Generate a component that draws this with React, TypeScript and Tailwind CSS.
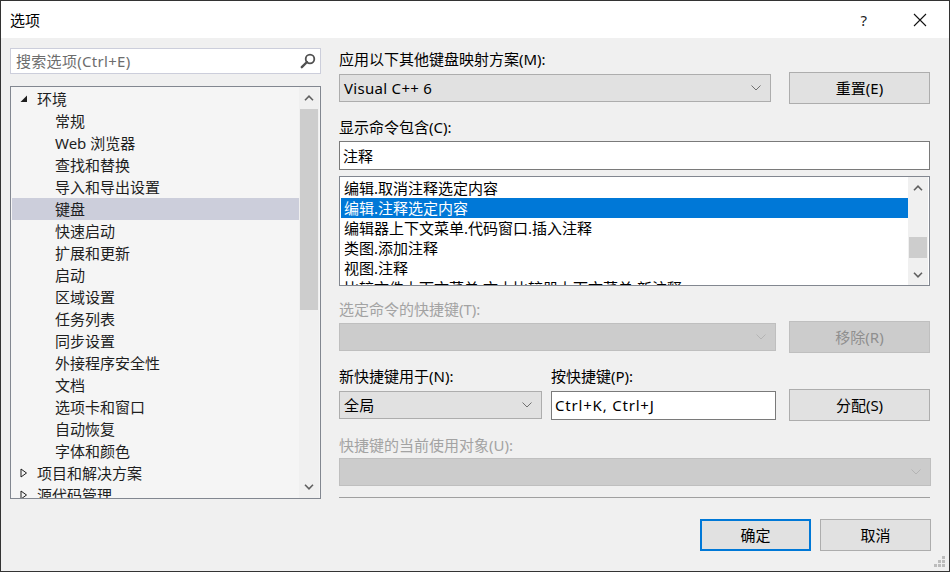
import React from "react";

const treeItems: { label: string; level: number; state?: "open" | "closed" }[] = [
  { label: "环境", level: 0, state: "open" },
  { label: "常规", level: 1 },
  { label: "Web 浏览器", level: 1 },
  { label: "查找和替换", level: 1 },
  { label: "导入和导出设置", level: 1 },
  { label: "键盘", level: 1 },
  { label: "快速启动", level: 1 },
  { label: "扩展和更新", level: 1 },
  { label: "启动", level: 1 },
  { label: "区域设置", level: 1 },
  { label: "任务列表", level: 1 },
  { label: "同步设置", level: 1 },
  { label: "外接程序安全性", level: 1 },
  { label: "文档", level: 1 },
  { label: "选项卡和窗口", level: 1 },
  { label: "自动恢复", level: 1 },
  { label: "字体和颜色", level: 1 },
  { label: "项目和解决方案", level: 0, state: "closed" },
  { label: "源代码管理", level: 0, state: "closed" },
];

const commands = [
  "编辑.取消注释选定内容",
  "编辑.注释选定内容",
  "编辑器上下文菜单.代码窗口.插入注释",
  "类图.添加注释",
  "视图.注释",
  "比较文件上下文菜单.文本比较器上下文菜单.新注释",
];

const ScrollArrow = ({ up }: { up?: boolean }) => (
  <svg width="10" height="6" viewBox="0 0 10 6">
    <polyline
      points={up ? "1,5.2 5,1.2 9,5.2" : "1,0.8 5,4.8 9,0.8"}
      fill="none"
      stroke="#606060"
      strokeWidth="1.6"
    />
  </svg>
);

const ComboArrow = ({ disabled }: { disabled?: boolean }) => (
  <svg width="10" height="6" viewBox="0 0 10 6">
    <polyline points="0.5,0.5 5,5 9.5,0.5" fill="none" stroke={disabled ? "#b4b4b4" : "#707070"} strokeWidth="1" />
  </svg>
);

const Combo = ({ value, width, disabled }: { value?: string; width: string; disabled?: boolean }) => (
  <div
    className={`${width} h-[28px] flex items-center pl-[4px] pr-[9px] border ${
      disabled ? "bg-[#cccccc] border-[#bfbfbf]" : "bg-[#e1e1e1] border-[#adadad]"
    }`}
  >
    <span className="flex-1 text-[15px] leading-[20px] text-black tracking-[0.3px]">{value}</span>
    <ComboArrow disabled={disabled} />
  </div>
);

const Button = ({ label, disabled, primary, width = "w-[141px]" }: { label: string; disabled?: boolean; primary?: boolean; width?: string }) => (
  <div
    className={`${width} h-[32px] flex items-center justify-center text-[15px] leading-[20px] ${
      disabled
        ? "bg-[#cccccc] border border-[#bfbfbf] text-[#8f8f8f]"
        : primary
        ? "bg-[#e1e1e1] border-2 border-[#0078d7] text-black"
        : "bg-[#e1e1e1] border border-[#adadad] text-black"
    }`}
  >
    {label}
  </div>
);

const Label = ({ text, disabled }: { text: string; disabled?: boolean }) => (
  <div className={`h-[20px] text-[15px] leading-[20px] whitespace-nowrap ${disabled ? "text-[#a3a3a3]" : "text-black"}`}>{text}</div>
);

const Expander = ({ state }: { state?: "open" | "closed" }) =>
  state === "open" ? (
    <svg width="8" height="8" viewBox="0 0 8 8" className="mr-[9px]">
      <polygon points="7,0.5 7,7 0.5,7" fill="#1e1e1e" />
    </svg>
  ) : (
    <svg width="8" height="10" viewBox="0 0 8 10" className="mr-[9px]">
      <polygon points="1,1 6.5,5 1,9" fill="none" stroke="#1e1e1e" strokeWidth="1" />
    </svg>
  );

export default function App() {
  return (
    <div className="relative w-[950px] h-[572px] flex flex-col overflow-hidden border border-[#333333] bg-[#f0f0f0] text-black font-['Noto_Sans','Noto_Sans_CJK_SC',sans-serif]">
      {/* Title bar */}
      <div className="h-[37px] shrink-0 bg-white flex items-center">
        <span className="pl-[9px] text-[15px] leading-[20px] font-['Noto_Sans_CJK_SC',sans-serif]">选项</span>
        <span className="ml-auto text-[15px] leading-[20px] text-[#222]">?</span>
        <svg width="14" height="14" viewBox="0 0 14 14" className="ml-[46px] mr-[22px]">
          <path d="M1 1 L13 13 M13 1 L1 13" stroke="#111" strokeWidth="1.1" />
        </svg>
      </div>

      <div className="flex flex-1">
        {/* Left: search + tree */}
        <div className="pl-[9px] pt-[10px] flex flex-col">
          <div className="w-[311px] h-[26px] bg-white border border-[#cccedb] flex items-center pl-[5px] pr-[4px]">
            <span className="flex-1 text-[15px] leading-[20px] text-[#6d6d6d] tracking-[0.3px]">搜索选项(Ctrl+E)</span>
            <svg width="16" height="16" viewBox="0 0 16 16">
              <circle cx="10" cy="6" r="4.3" fill="none" stroke="#505050" strokeWidth="1.8" />
              <path d="M7 9 L1.8 14.2" stroke="#505050" strokeWidth="2.4" strokeLinecap="round" />
            </svg>
          </div>

          <div className="mt-[12px] w-[311px] h-[413px] border border-[#828790] bg-[#f5f5f5] flex overflow-hidden">
            <div className="flex-1 pt-[1px] pl-[1px] overflow-hidden">
              {treeItems.map((item) => (
                <div
                  key={item.label}
                  className={`h-[22px] flex items-center text-[15px] leading-[20px] text-[#1e1e1e] ${
                    item.label === "键盘" ? "bg-[#cccedb]" : ""
                  } ${item.level === 0 ? "pl-[8px]" : "pl-[43px]"}`}
                >
                  {item.level === 0 && <Expander state={item.state} />}
                  <span className="whitespace-nowrap">{item.label}</span>
                </div>
              ))}
            </div>
            <div className="w-[20px] mr-[1px] bg-[#f0f0f0] flex flex-col">
              <div className="h-[22px] flex items-center justify-center">
                <ScrollArrow up />
              </div>
              <div className="h-[201px] mx-[1px] bg-[#cdcdcd]" />
              <div className="flex-1" />
              <div className="h-[22px] flex items-center justify-center">
                <ScrollArrow />
              </div>
            </div>
          </div>
        </div>

        {/* Right: keyboard settings */}
        <div className="ml-[18px] pt-[11px] w-[592px] flex flex-col">
          <Label text="应用以下其他键盘映射方案(M):" />
          <div className="mt-[3px] h-[32px] flex items-center">
            <Combo value="Visual C++ 6" width="w-[432px]" />
            <div className="ml-auto mr-[1px]">
              <Button label="重置(E)" />
            </div>
          </div>

          <div className="mt-[13px]">
            <Label text="显示命令包含(C):" />
          </div>
          <div className="mt-[4px] w-[591px] h-[29px] bg-white border border-[#7a7a7a] flex items-center pl-[3px]">
            <span className="text-[15px] leading-[20px]">注释</span>
          </div>

          <div className="mt-[6px] w-[591px] h-[110px] bg-white border border-[#828790] flex overflow-hidden">
            <div className="flex-1 pt-[1px] pl-[1px] overflow-hidden">
              {commands.map((c, i) => (
                <div
                  key={c}
                  className={`h-[20px] flex items-center pl-[3px] text-[15px] leading-[20px] whitespace-nowrap ${
                    i === 1 ? "bg-[#0078d7] text-white" : "text-black"
                  }`}
                >
                  {c}
                </div>
              ))}
            </div>
            <div className="w-[20px] mr-[1px] bg-[#f0f0f0] flex flex-col">
              <div className="h-[21px] flex items-center justify-center">
                <ScrollArrow up />
              </div>
              <div className="h-[39px]" />
              <div className="h-[21px] mx-[1px] bg-[#cdcdcd]" />
              <div className="flex-1" />
              <div className="h-[21px] flex items-center justify-center">
                <ScrollArrow />
              </div>
            </div>
          </div>

          <div className="mt-[13px]">
            <Label text="选定命令的快捷键(T):" disabled />
          </div>
          <div className="mt-[2px] h-[32px] flex items-center">
            <Combo width="w-[437px]" disabled />
            <div className="ml-auto mr-[1px]">
              <Button label="移除(R)" disabled />
            </div>
          </div>

          <div className="mt-[13px] flex">
            <div className="w-[212px]">
              <Label text="新快捷键用于(N):" />
            </div>
            <Label text="按快捷键(P):" />
          </div>
          <div className="mt-[3px] h-[32px] flex items-center">
            <Combo value="全局" width="w-[203px]" />
            <div className="ml-[9px] w-[225px] h-[29px] bg-white border border-[#7a7a7a] flex items-center pl-[3px]">
              <span className="text-[15px] leading-[20px] tracking-[0.8px]">Ctrl+K, Ctrl+J</span>
            </div>
            <div className="ml-auto mr-[1px]">
              <Button label="分配(S)" />
            </div>
          </div>

          <div className="mt-[14px]">
            <Label text="快捷键的当前使用对象(U):" disabled />
          </div>
          <div className="mt-[3px]">
            <Combo width="w-[592px]" disabled />
          </div>

          <div className="mt-[11px] h-px w-[591px] bg-[#a0a0a0]" />

          <div className="mt-[21px] flex justify-end">
            <Button label="确定" primary width="w-[111px]" />
            <div className="ml-[9px]">
              <Button label="取消" width="w-[111px]" />
            </div>
          </div>
        </div>
      </div>

      {/* size grip */}
      <svg width="12" height="12" viewBox="0 0 12 12" className="absolute right-[3px] bottom-[3px]">
        <rect x="8" y="0" width="3" height="3" fill="#bdbdbd" />
        <rect x="4" y="4" width="3" height="3" fill="#bdbdbd" />
        <rect x="8" y="4" width="3" height="3" fill="#bdbdbd" />
        <rect x="0" y="8" width="3" height="3" fill="#bdbdbd" />
        <rect x="4" y="8" width="3" height="3" fill="#bdbdbd" />
        <rect x="8" y="8" width="3" height="3" fill="#bdbdbd" />
      </svg>
    </div>
  );
}
